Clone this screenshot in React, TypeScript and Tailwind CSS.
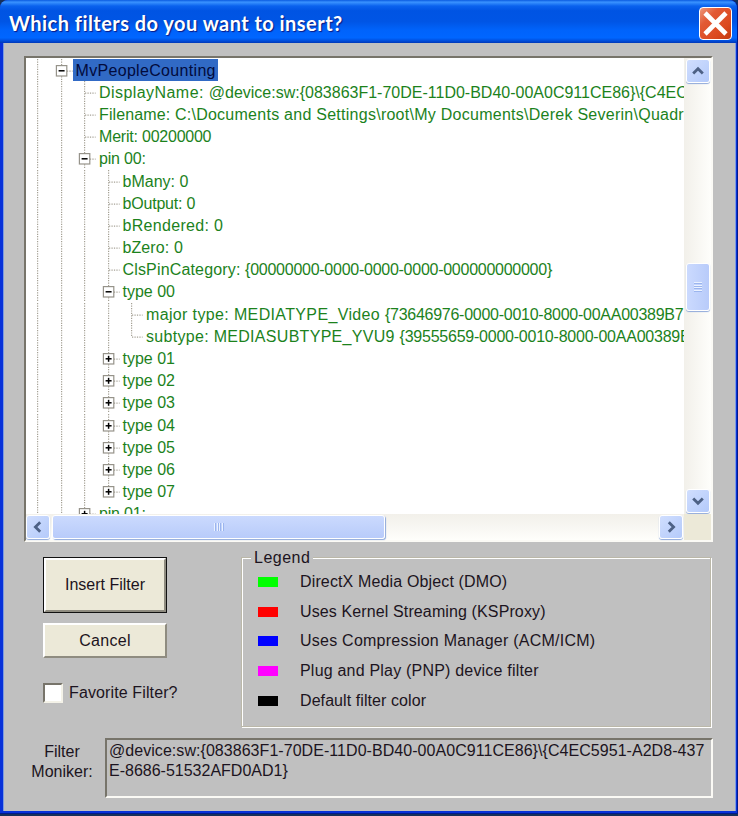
import React from "react";

type Cell = "line" | "tee" | "ell" | "minus" | "plus" | "plusEnd";

interface Row {
  cells: Cell[];
  label: string;
  value?: string;
  labelTracking?: string;
  valueTracking?: string;
  selected?: boolean;
}

const L: Cell = "line";

const rows: Row[] = [
  { cells: [L, "minus"], label: "MvPeopleCounting", selected: true, labelTracking: "tracking-[0.32px]" },
  {
    cells: [L, L, "tee"],
    label: "DisplayName: ",
    labelTracking: "tracking-[0.44px]",
    value: "@device:sw:{083863F1-70DE-11D0-BD40-00A0C911CE86}\\{C4EC",
    valueTracking: "tracking-[0px]",
  },
  {
    cells: [L, L, "tee"],
    label: "Filename: ",
    labelTracking: "tracking-[0.12px]",
    value: "C:\\Documents and Settings\\root\\My Documents\\Derek Severin\\Quadr",
    valueTracking: "tracking-[0.26px]",
  },
  { cells: [L, L, "tee"], label: "Merit: ", value: "00200000", labelTracking: "tracking-[-0.2px]", valueTracking: "tracking-[-0.25px]" },
  { cells: [L, L, "minus"], label: "pin 00:", labelTracking: "tracking-[-0.2px]" },
  { cells: [L, L, L, "tee"], label: "bMany: 0" },
  { cells: [L, L, L, "tee"], label: "bOutput: 0", labelTracking: "tracking-[-0.2px]" },
  { cells: [L, L, L, "tee"], label: "bRendered: 0", labelTracking: "tracking-[0.32px]" },
  { cells: [L, L, L, "tee"], label: "bZero: 0", labelTracking: "tracking-[0.1px]" },
  {
    cells: [L, L, L, "tee"],
    label: "ClsPinCategory: ",
    labelTracking: "tracking-[0.16px]",
    value: "{00000000-0000-0000-0000-000000000000}",
    valueTracking: "tracking-[-0.26px]",
  },
  { cells: [L, L, L, "minus"], label: "type 00" },
  {
    cells: [L, L, L, L, "tee"],
    label: "major type: MEDIATYPE_Video ",
    labelTracking: "tracking-[0.36px]",
    value: "{73646976-0000-0010-8000-00AA00389B7",
    valueTracking: "tracking-[-0.26px]",
  },
  {
    cells: [L, L, L, L, "ell"],
    label: "subtype: MEDIASUBTYPE_YVU9 ",
    labelTracking: "tracking-[0.3px]",
    value: "{39555659-0000-0010-8000-00AA00389B",
    valueTracking: "tracking-[-0.23px]",
  },
  { cells: [L, L, L, "plus"], label: "type 01" },
  { cells: [L, L, L, "plus"], label: "type 02" },
  { cells: [L, L, L, "plus"], label: "type 03" },
  { cells: [L, L, L, "plus"], label: "type 04" },
  { cells: [L, L, L, "plus"], label: "type 05" },
  { cells: [L, L, L, "plus"], label: "type 06" },
  { cells: [L, L, L, "plusEnd"], label: "type 07" },
  { cells: [L, L, "plus"], label: "pin 01:", labelTracking: "tracking-[-0.2px]" },
];

function TreeCell({ kind }: { kind: Cell }) {
  const box = kind === "minus" || kind === "plus" || kind === "plusEnd";
  const end = kind === "ell" || kind === "plusEnd" ? 12.2 : 22.2;
  return (
    <svg className="h-[22.2px] w-[23.5px] shrink-0" viewBox="0 0 23.5 22.2">
      <path d={`M11.6 0V${end}`} stroke="#a5a195" strokeWidth="1.2" strokeDasharray="1.23 1.23" />
      {kind !== "line" && (
        <path d="M12 12.2H22.6" stroke="#a5a195" strokeWidth="1.2" strokeDasharray="1.23 1.23" />
      )}
      {box && (
        <>
          <rect x="6.4" y="6.6" width="10.4" height="10.4" fill="#fff" stroke="#96938a" strokeWidth="1.2" />
          <path d="M8.6 11.8H14.6" stroke="#000" strokeWidth="1.5" />
          {kind !== "minus" && <path d="M11.6 8.8V14.8" stroke="#000" strokeWidth="1.5" />}
        </>
      )}
    </svg>
  );
}

function TreeRow({ row }: { row: Row }) {
  return (
    <div className="flex h-[22.2px] shrink-0">
      {row.cells.map((c, i) => (
        <TreeCell key={i} kind={c} />
      ))}
      <span
        className={`h-[22px] shrink-0 pr-[2px] pl-[2.5px] leading-[23.4px] whitespace-pre ${
          row.selected ? "bg-[#316ac5] text-[#020b3c]" : "text-[#1c821c]"
        }`}
      >
        <span className={row.labelTracking ?? ""}>{row.label}</span>
        {row.value && <span className={row.valueTracking ?? ""}>{row.value}</span>}
      </span>
    </div>
  );
}

function ScrollButton({ d }: { d: string }) {
  return (
    <div className="flex size-6 shrink-0 items-center justify-center rounded-[3px] border border-white bg-linear-to-br from-[#d0defe] to-[#b4cafa] shadow-[0_1px_1px_#8fa9da]">
      <svg className="size-3" viewBox="0 0 12 12" fill="none" stroke="#4d6185" strokeWidth="2.8">
        <path d={d} />
      </svg>
    </div>
  );
}

const legend = [
  { color: "bg-[#00ff00]", tracking: "tracking-[0.14px]", text: "DirectX Media Object (DMO)" },
  { color: "bg-[#ff0000]", tracking: "tracking-[0.12px]", text: "Uses Kernel Streaming (KSProxy)" },
  { color: "bg-[#0000ff]", tracking: "tracking-[0.24px]", text: "Uses Compression Manager (ACM/ICM)" },
  { color: "bg-[#ff00ff]", tracking: "tracking-[0.2px]", text: "Plug and Play (PNP) device filter" },
  { color: "bg-black", tracking: "tracking-[0.08px]", text: "Default filter color" },
];

export default function App() {
  return (
    <div className="h-[816px] w-[738px] overflow-hidden bg-[#16305a] font-['Liberation_Sans',Arial,sans-serif] text-[16px] whitespace-nowrap text-[#1c1420]">
      <div className="flex h-[814px] flex-col rounded-t-[8px] border-r border-b border-[#001a8c] bg-[#0831d9]">
        <header className="flex h-[43px] shrink-0 items-center justify-between rounded-t-[8px] bg-[linear-gradient(180deg,#0a5be0_0%,#3a93ff_5%,#0a62ee_14%,#0054e3_25%,#0055e5_50%,#0063fb_70%,#0066ff_88%,#0050e0_94%,#0038b8_100%)] pt-[3px] pr-[5px] pl-[9px]">
          <h1 className="font-['Trebuchet_MS',Lato,sans-serif] text-[20px] leading-none font-bold tracking-[0.46px] text-white [text-shadow:1px_1px_1px_#0a1883]">
            Which filters do you want to insert?
          </h1>
          <button className="flex size-[33px] items-center justify-center rounded-[4px] border-[1.5px] border-white bg-[linear-gradient(135deg,#ee987c_0%,#e25a35_30%,#dc4a20_70%,#c23a12_100%)]">
            <svg className="size-[25px]" viewBox="0 0 25 25" stroke="#fff" strokeWidth="4.6">
              <path d="M2 2L23 23M23 2L2 23" />
            </svg>
          </button>
        </header>

        <main className="mr-px mb-[2px] ml-[3px] flex flex-1 flex-col border-x border-[#7c9be0] bg-[#c0c0c0] pt-[13px] pl-5">
          <section className="flex h-[486px] w-[689px] shrink-0 flex-col border-2 border-t-[#77746a] border-r-[#fbfaf5] border-b-[#fbfaf5] border-l-[#77746a] bg-white">
            <div className="flex h-[456px] shrink-0">
              <div className="flex w-[658px] flex-col overflow-hidden pt-[0.6px]">
                {rows.map((r, i) => (
                  <TreeRow key={i} row={r} />
                ))}
              </div>
              <div className="flex w-[27px] flex-col items-center bg-linear-to-r from-[#f2f0ea] to-[#fefefb] pt-px">
                <ScrollButton d="M1.2 8.6L6 3.8L10.8 8.6" />
                <div className="mt-[180px] flex h-[48px] w-[24px] flex-col items-center justify-center rounded-[3px] border border-white bg-linear-to-r from-[#cbdafe] to-[#b8cbfa] shadow-[0_1px_1px_#8fa9da]">
                  <i className="h-px w-2 bg-[#eaf1ff]" />
                  <i className="h-px w-2 bg-[#9bb5ee]" />
                  <i className="mt-px h-px w-2 bg-[#eaf1ff]" />
                  <i className="h-px w-2 bg-[#9bb5ee]" />
                  <i className="h-px w-2 bg-[#eaf1ff]" />
                  <i className="h-px w-2 bg-[#9bb5ee]" />
                  <i className="mt-px h-px w-2 bg-[#eaf1ff]" />
                  <i className="h-px w-2 bg-[#9bb5ee]" />
                </div>
                <div className="flex-1" />
                <ScrollButton d="M1.2 3.4L6 8.2L10.8 3.4" />
                <div className="h-px" />
              </div>
            </div>
            <div className="flex flex-1">
              <div className="flex w-[658px] items-center bg-linear-to-b from-[#f2f0ea] to-[#fefefb]">
                <ScrollButton d="M8.2 1.2L3.4 6L8.2 10.8" />
                <div className="ml-[2px] flex h-6 w-[333px] items-center justify-center rounded-[3px] border border-white bg-linear-to-b from-[#cbdafe] to-[#b8cbfa] shadow-[1px_1px_1px_#8fa9da]">
                  <i className="h-2 w-px bg-[#eaf1ff]" />
                  <i className="h-2 w-px bg-[#9bb5ee]" />
                  <i className="ml-px h-2 w-px bg-[#eaf1ff]" />
                  <i className="h-2 w-px bg-[#9bb5ee]" />
                  <i className="h-2 w-px bg-[#eaf1ff]" />
                  <i className="h-2 w-px bg-[#9bb5ee]" />
                  <i className="ml-px h-2 w-px bg-[#eaf1ff]" />
                  <i className="h-2 w-px bg-[#9bb5ee]" />
                </div>
                <div className="flex-1" />
                <ScrollButton d="M3.8 1.2L8.6 6L3.8 10.8" />
                <div className="w-px" />
              </div>
              <div className="flex-1 bg-[#ece9d8]" />
            </div>
          </section>

          <section className="mt-[15px] flex h-[170px] shrink-0">
            <div className="ml-[19px] w-[124px]">
              <button className="flex h-[56px] w-full border border-[#111]">
                <span className="flex h-full w-full items-center justify-center border-2 border-t-white border-r-[#8f8c80] border-b-[#8f8c80] border-l-white bg-[#ece9d8]">
                  Insert Filter
                </span>
              </button>
              <button className="mt-[10px] flex h-[35px] w-full items-center justify-center border-2 border-t-white border-r-[#8f8c80] border-b-[#8f8c80] border-l-white bg-[#ece9d8] tracking-[0.3px]">
                Cancel
              </button>
              <label className="mt-[25px] flex h-5 items-center gap-[6px] tracking-[0.12px]">
                <span className="size-5 shrink-0 border-2 border-t-[#77746a] border-r-[#f4f2e8] border-b-[#f4f2e8] border-l-[#77746a] bg-white" />
                Favorite Filter?
              </label>
            </div>
            <div className="relative ml-[74px] h-[170px] w-[470px] border border-[#bbb8a9] shadow-[inset_1px_1px_0_#fff,1px_1px_0_#fff]">
              <span className="absolute top-[-10px] left-[9px] bg-[#c0c0c0] px-[3px] leading-[20px] tracking-[0.5px]">Legend</span>
              <ul className="pt-[9px] pl-4">
                {legend.map((l) => (
                  <li key={l.text} className="flex h-[29.7px] items-center">
                    <i className={`h-[10px] w-5 ${l.color}`} />
                    <span className={`ml-[22px] ${l.tracking}`}>{l.text}</span>
                  </li>
                ))}
              </ul>
            </div>
          </section>

          <section className="mt-[11px] flex h-[60px] shrink-0">
            <div className="w-[81px] pt-1 pr-[5px] text-center leading-[20px]">
              Filter
              <br />
              Moniker:
            </div>
            <div className="w-[608px] border-2 border-t-[#77746a] border-r-[#fbfaf5] border-b-[#fbfaf5] border-l-[#77746a] pt-[1px] pl-[2px] leading-[20px]">
              <span className="tracking-[0.05px]">{"@device:sw:{083863F1-70DE-11D0-BD40-00A0C911CE86}\\{C4EC5951-A2D8-437"}</span>
              <br />
              {"E-8686-51532AFD0AD1}"}
            </div>
          </section>
        </main>
      </div>
    </div>
  );
}
